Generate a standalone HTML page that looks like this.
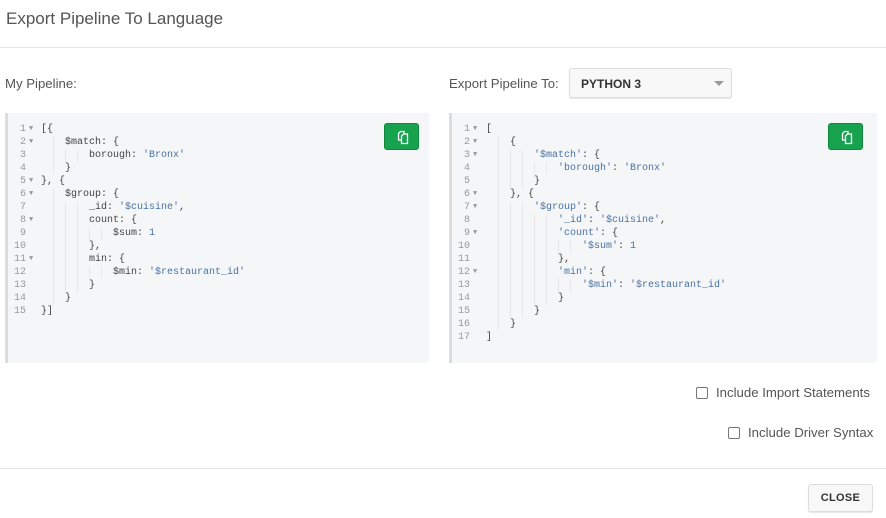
<!DOCTYPE html>
<html><head><meta charset="utf-8"><style>
*{box-sizing:border-box;margin:0;padding:0}
body{width:886px;height:518px;background:#fff;font-family:"Liberation Sans",sans-serif;color:#494747;position:relative;overflow:hidden}
.abs{position:absolute}
.title{left:6px;top:9px;font-size:17px;color:#555}
.hr{left:0;width:886px;height:1px;background:#e4e4e4}
.lbl{font-size:13.2px;color:#555}
.sel{left:569px;top:68px;width:163px;height:30px;border:1px solid #ddd;border-radius:3px;background:#f8f8f8;box-shadow:0 1px 1px rgba(0,0,0,.1);font-size:12px;font-weight:bold;color:#333;padding:8px 0 0 11px}
.sel:after{content:"";position:absolute;right:7px;top:12px;border-left:5px solid transparent;border-right:5px solid transparent;border-top:5px solid #999}
.ed{top:113px;height:250px;background:#f5f6f7;border-left:3px solid #dcdcdc}
.code{position:absolute;top:10px;font-family:"Liberation Mono",monospace;font-size:10px;color:#444}
.ln{height:13px;line-height:13px;white-space:pre;position:relative}
.g{position:absolute;width:20px;text-align:right;color:#999}
.f{position:absolute;color:#999;font-size:7px}
.t{position:absolute;white-space:pre}
.u{display:inline-block;width:12px;height:13px;vertical-align:top}
.u.b{border-left:1px solid #e8e8e8}
.s{color:#4a72a5}
.btn{width:35px;height:27px;background:#17a34d;border:1px solid #10893e;border-radius:3px}
.chk{width:12px;height:12px;border:1px solid #777;border-radius:2px;background:#fff}
.close{left:808px;top:484px;width:65px;height:28px;border:1px solid #ddd;border-radius:3px;background:#f8f8f8;box-shadow:0 1px 1px rgba(0,0,0,.1);font-size:11px;font-weight:bold;color:#333;text-align:center;line-height:27px;letter-spacing:.3px}
</style></head><body>
<div class="abs title">Export Pipeline To Language</div>
<div class="abs hr" style="top:47px"></div>
<div class="abs lbl" style="left:5px;top:76px">My Pipeline:</div>
<div class="abs lbl" style="left:449px;top:76px">Export Pipeline To:</div>
<div class="abs sel">PYTHON 3</div>

<div class="abs ed" style="left:5px;width:424px">
<div class="code" style="left:0;width:420px" id="L"></div>
<div class="abs btn" style="left:376px;top:10px"><svg width="35" height="27" viewBox="0 0 35 27"><g fill="none" stroke="#fff" stroke-width="1.3"><path d="M13.5 16V9.5l2-2h3.5v8.5z"/><path d="M16.5 19.5v-7.5l2-2h4v9.5z" fill="#17a34d"/></g></svg></div>
</div>
<div class="abs ed" style="left:449px;width:428px">
<div class="code" style="left:0;width:424px" id="R"></div>
<div class="abs btn" style="left:376px;top:10px"><svg width="35" height="27" viewBox="0 0 35 27"><g fill="none" stroke="#fff" stroke-width="1.3"><path d="M13.5 16V9.5l2-2h3.5v8.5z"/><path d="M16.5 19.5v-7.5l2-2h4v9.5z" fill="#17a34d"/></g></svg></div>
</div>

<div class="abs chk" style="left:696px;top:387px"></div>
<div class="abs lbl" style="left:716px;top:385px">Include Import Statements</div>
<div class="abs chk" style="left:728px;top:427px"></div>
<div class="abs lbl" style="left:748px;top:425px">Include Driver Syntax</div>
<div class="abs hr" style="top:468px"></div>
<div class="abs close">CLOSE</div>

<script>
function build(id,lines,codeX,gutR){
 var h='';
 lines.forEach(function(l,i){
  var ind='';for(var k=0;k<l[1];k++)ind+='<span class="u'+(k>0?' b':'')+'"></span>';
  h+='<div class="ln"><span class="g" style="left:'+(gutR-20)+'px">'+(i+1)+'</span>'+(l[2]?'<span class="f" style="left:'+(gutR+3)+'px">&#9660;</span>':'')+'<span class="t" style="left:'+codeX+'px">'+ind+l[0]+'</span></div>';
 });
 document.getElementById(id).innerHTML=h;
}
var S=function(x){return '<span class="s">'+x+'</span>'};
build('L',[
["[{",0,1],["$match: {",2,1],["borough: "+S("'Bronx'"),4],["}",2],["}, {",0,1],["$group: {",2,1],
["_id: "+S("'$cuisine'")+",",4],["count: {",4,1],["$sum: "+S("1"),6],["},",4],["min: {",4,1],
["$min: "+S("'$restaurant_id'"),6],["}",4],["}",2],["}]",0]],33,18);
build('R',[
["[",0,1],["{",2,1],[S("'$match'")+": {",4,1],[S("'borough'")+": "+S("'Bronx'"),6],["}",4],["}, {",2,1],
[S("'$group'")+": {",4,1],[S("'_id'")+": "+S("'$cuisine'")+",",6],[S("'count'")+": {",6,1],[S("'$sum'")+": "+S("1"),8],
["},",6],[S("'min'")+": {",6,1],[S("'$min'")+": "+S("'$restaurant_id'"),8],["}",6],["}",4],["}",2],["]",0]],34,18);
</script>
</body></html>
